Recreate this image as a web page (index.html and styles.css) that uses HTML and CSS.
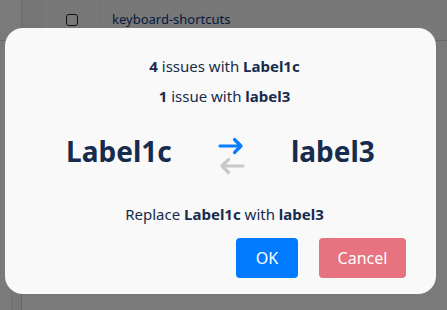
FILE: index.html
```html
<!DOCTYPE html>
<html>
<head>
<meta charset="utf-8">
<link rel="stylesheet" href="styles.css">
</head>
<body>
<div class="page">
  <div class="row row-top">
    <div class="cell c1"></div>
    <div class="cell c2"></div>
    <div class="cell c3"><span class="checkbox"></span></div>
    <div class="cell c4"><a class="link">keyboard-shortcuts</a></div>
  </div>
  <div class="row row-mid"></div>
  <div class="row row-bot">
    <div class="cell b1"></div>
    <div class="cell b2"></div>
    <div class="cell b3"></div>
  </div>
</div>
<div class="backdrop">
  <div class="modal">
    <p class="line">
      <b>4</b> issues with <b>Label1c</b>
    </p>
    <p class="line line2">
      <b>1</b> issue with <b>label3</b>
    </p>
    <div class="swap">
      <span class="big">Label1c</span>
      <span class="arrows">
        <svg width="27" height="44" viewBox="0 0 27 44">
          <path d="M2 12 H23 M16.5 5.5 L23 12 L16.5 18.5" fill="none" stroke="#0a7cff" stroke-width="3.2" stroke-linecap="round" stroke-linejoin="round"/>
          <path d="M25 32 H4 M10.5 25.5 L4 32 L10.5 38.5" fill="none" stroke="#c8c8c8" stroke-width="3.2" stroke-linecap="round" stroke-linejoin="round"/>
        </svg>
      </span>
      <span class="big">label3</span>
    </div>
    <p class="line replace">Replace <b>Label1c</b> with <b>label3</b></p>
    <div class="actions">
      <button class="btn btn-ok">OK</button>
      <button class="btn btn-cancel">Cancel</button>
    </div>
  </div>
</div>
</body>
</html>
```
FILE: styles.css
```css
html, body {
  margin: 0;
  padding: 0;
  width: 447px;
  height: 310px;
  overflow: hidden;
  font-family: "Noto Sans", "Open Sans", sans-serif;
  background: #ffffff;
}
.page {
  width: 447px;
  height: 310px;
  display: flex;
  flex-direction: column;
}
.row {
  display: flex;
}
.row-top {
  height: 40px;
  border-bottom: 1px solid #dcdcdc;
}
.row-mid {
  flex: 1;
}
.row-bot {
  height: 20px;
}
.cell {
  height: 100%;
  box-sizing: border-box;
}
.c1 { width: 22px; border-right: 1px solid #e0e0e0; background: #fff; }
.c2 { width: 22px; background: #f4f4f4; }
.c3 { width: 56px; background: #fbfbfb; display: flex; align-items: center; justify-content: center; border-right: 1px solid #f0f0f0; }
.c4 { flex: 1; display: flex; align-items: center; padding-left: 12px; background: #fafafa; }
.b1 { width: 12px; border-right: 1px solid #e6e6e6; background: #fff; }
.b2 { width: 10px; border-right: 1px solid #dadada; background: #f8f8f8; }
.b3 { flex: 1; background: #fff; }
.checkbox {
  width: 10px;
  height: 10px;
  border: 1.5px solid #222;
  border-radius: 3px;
}
.link {
  color: #0b3a85;
  font-size: 13px;
  margin-top: -2px;
}
.backdrop {
  position: fixed;
  inset: 0;
  background: rgba(0, 0, 0, 0.52);
}
.modal {
  position: absolute;
  left: 5px;
  top: 28px;
  width: 431px;
  height: 266px;
  box-sizing: border-box;
  background: #f9f9f9;
  border-radius: 18px;
  padding: 27px 30px 16px 38px;
  color: #172b4d;
  display: flex;
  flex-direction: column;
}
.line {
  margin: 0;
  text-align: center;
  font-size: 15px;
  line-height: 22px;
}
.line b { font-weight: 700; }
.line2 { margin-top: 8px; }
.swap {
  display: flex;
  justify-content: space-around;
  align-items: center;
  margin-top: 14px;
  height: 60px;
  padding-right: 8px;
}
.big {
  font-size: 28px;
  font-weight: 700;
  line-height: 40px;
}
.arrows {
  display: flex;
  margin-top: 10px;
}
.replace {
  margin-top: 22px;
}
.actions {
  display: flex;
  justify-content: flex-end;
  gap: 21px;
  margin-top: 13px;
}
.btn {
  font-family: inherit;
  font-size: 16px;
  height: 40px;
  border: none;
  border-radius: 4px;
  color: #fff;
  padding: 0;
  cursor: pointer;
}
.btn-ok {
  background: #007bff;
  width: 62px;
}
.btn-cancel {
  background: #e6737f;
  width: 87px;
}
```
